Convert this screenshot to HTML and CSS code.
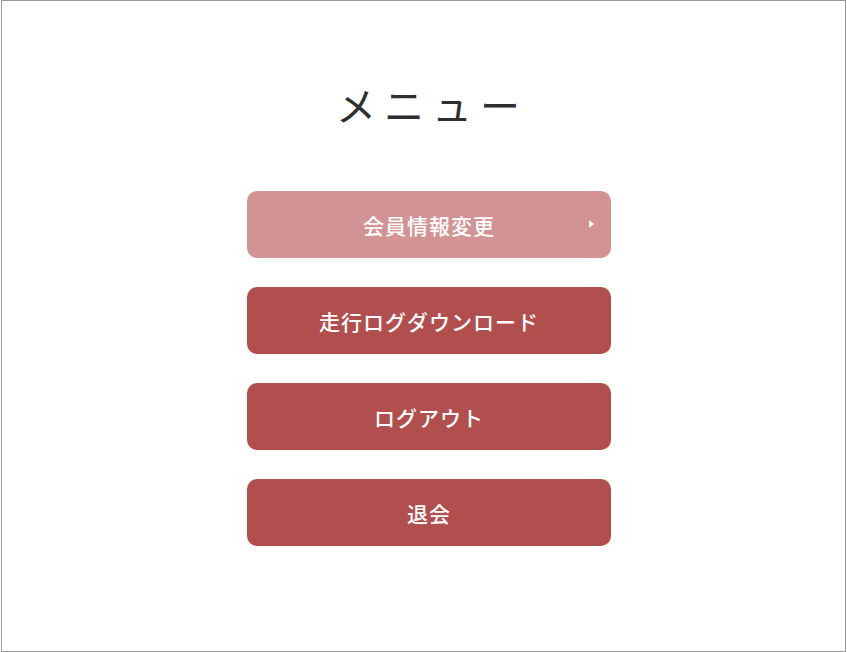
FILE: index.html
```html
<!DOCTYPE html>
<html lang="ja">
<head>
<meta charset="utf-8">
<title>メニュー</title>
<link rel="stylesheet" href="styles.css">
</head>
<body>
<div class="frame">
  <h1 class="title">メニュー</h1>
  <nav class="menu">
    <a class="btn btn-active" href="#">会員情報変更<span class="arrow"></span></a>
    <a class="btn" href="#">走行ログダウンロード</a>
    <a class="btn" href="#">ログアウト</a>
    <a class="btn" href="#">退会</a>
  </nav>
</div>
</body>
</html>
```
FILE: styles.css
```css
html, body {
  margin: 0;
  padding: 0;
  background: #ffffff;
}
body {
  font-family: "Noto Sans CJK JP", "Noto Sans", sans-serif;
}
.frame {
  box-sizing: border-box;
  margin-left: 1px;
  width: 845px;
  height: 652px;
  border: 1px solid #9a9a9a;
  display: flex;
  flex-direction: column;
  align-items: center;
  padding-top: 75px;
}
.title {
  margin: 0 0 0 17px;
  font-size: 40px;
  font-weight: 400;
  color: #2f2f2f;
  letter-spacing: 8px;
  line-height: 56px;
}
.menu {
  margin-top: 59px;
  margin-left: 11px;
  display: flex;
  flex-direction: column;
  gap: 29px;
}
.btn {
  position: relative;
  box-sizing: border-box;
  width: 364px;
  height: 67px;
  border-radius: 10px;
  background: #b14f4f;
  color: #ffffff;
  text-decoration: none;
  font-size: 21px;
  font-weight: 500;
  letter-spacing: 1px;
  display: flex;
  align-items: center;
  justify-content: center;
}
.btn-active {
  background: #d29394;
}
.arrow {
  position: absolute;
  right: 17px;
  top: 29px;
  width: 0;
  height: 0;
  border-top: 4px solid transparent;
  border-bottom: 4px solid transparent;
  border-left: 5px solid #ffffff;
}
```
